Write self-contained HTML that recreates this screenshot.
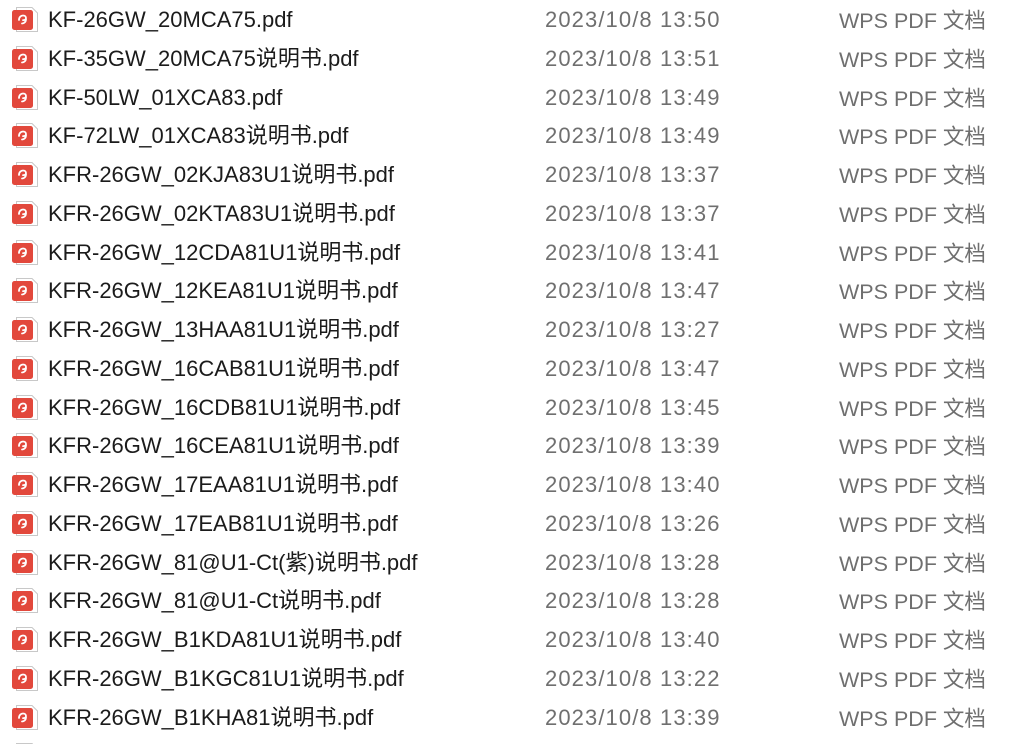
<!DOCTYPE html>
<html><head><meta charset="utf-8"><style>
html,body{margin:0;padding:0;background:#fff;width:1021px;height:744px;overflow:hidden;}
body{font-family:"Liberation Sans","Noto Sans CJK SC",sans-serif;font-size:21px;}
#c{position:relative;width:1021px;height:744px;overflow:hidden;}
.row{position:absolute;left:0;height:38px;width:1021px;}
.ic{position:absolute;left:12px;top:7px;width:26px;height:25px;}
.n,.d,.t{position:absolute;top:8px;height:24px;line-height:24px;white-space:nowrap;}
.n{left:48px;color:#1b1b1b;font-size:22px;}
.d{left:545px;color:#6f6f6f;font-size:22px;letter-spacing:1.1px;}
.t{left:839px;top:9px;color:#6f6f6f;font-size:21.5px;}
</style></head><body>
<div id="c"></div>
<script>
var rows=[["KF-26GW_20MCA75.pdf","13:50"],["KF-35GW_20MCA75说明书.pdf","13:51"],["KF-50LW_01XCA83.pdf","13:49"],["KF-72LW_01XCA83说明书.pdf","13:49"],["KFR-26GW_02KJA83U1说明书.pdf","13:37"],["KFR-26GW_02KTA83U1说明书.pdf","13:37"],["KFR-26GW_12CDA81U1说明书.pdf","13:41"],["KFR-26GW_12KEA81U1说明书.pdf","13:47"],["KFR-26GW_13HAA81U1说明书.pdf","13:27"],["KFR-26GW_16CAB81U1说明书.pdf","13:47"],["KFR-26GW_16CDB81U1说明书.pdf","13:45"],["KFR-26GW_16CEA81U1说明书.pdf","13:39"],["KFR-26GW_17EAA81U1说明书.pdf","13:40"],["KFR-26GW_17EAB81U1说明书.pdf","13:26"],["KFR-26GW_81@U1-Ct(紫)说明书.pdf","13:28"],["KFR-26GW_81@U1-Ct说明书.pdf","13:28"],["KFR-26GW_B1KDA81U1说明书.pdf","13:40"],["KFR-26GW_B1KGC81U1说明书.pdf","13:22"],["KFR-26GW_B1KHA81说明书.pdf","13:39"],["",""]];
var icon='<svg class="ic" viewBox="0 0 26 25"><path d="M4.5 0.5H20L25.5 6V24.5H4.5Z" fill="#fff" stroke="#c8c8c8"/><rect x="0" y="3" width="21" height="20" rx="2.5" fill="#e2483c"/><path d="M7 13c0-3 2-4.5 4-4.5s3 1.2 3 2.5-1.2 2.2-3 2.2M14 12c0 3-2 4.5-4 4.5" fill="none" stroke="#fff" stroke-width="1.8" stroke-linecap="round"/></svg>';
var h='';
rows.forEach(function(r,i){
 var y=Math.round(i*38.75);
 if(r[0]) h+='<div class="row" style="top:'+y+'px">'+icon+'<span class="n">'+r[0]+'</span><span class="d">2023/10/8 '+r[1]+'</span><span class="t">WPS PDF 文档</span></div>';
 else h+='<div class="row" style="top:'+y+'px">'+icon+'</div>';
});
document.getElementById('c').innerHTML=h;
</script>
</body></html>
